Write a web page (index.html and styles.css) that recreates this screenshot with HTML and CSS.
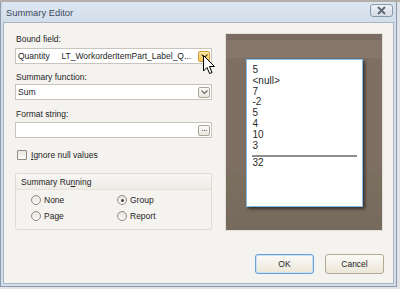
FILE: index.html
```html
<!DOCTYPE html>
<html lang="en">
<head>
    <meta charset="UTF-8">
    <meta name="viewport" content="width=device-width, initial-scale=1.0">
    <title>Summary Editor</title>
    <link rel="stylesheet" href="styles.css">
</head>
<body>
    <div class="desktop">
        <div class="window">
            <div class="titlebar">
                <span class="title">Summary Editor</span>
                <div class="close">
                    <svg width="11" height="9" viewBox="0 0 11 9">
                        <path d="M2 1 L9 8 M9 1 L2 8" stroke="#5f6978" stroke-width="2" fill="none"/>
                    </svg>
                </div>
            </div>
            <div class="client">
                <div class="main">
                    <div class="form">
                        <div class="label first">Bound field:</div>
                        <div class="combo">
                            <span class="value">Quantity&nbsp;&nbsp;&nbsp;&nbsp; LT_WorkorderItemPart_Label_Q...</span>
                            <span class="drop hot">
                                <svg width="7" height="5" viewBox="0 0 7 5"><path d="M0.5 0.5 L3.5 3.5 L6.5 0.5" stroke="#5a4a2a" stroke-width="1.2" fill="none"/></svg>
                            </span>
                        </div>
                        <div class="label second">Summary function:</div>
                        <div class="combo">
                            <span class="value">Sum</span>
                            <span class="drop">
                                <svg width="7" height="5" viewBox="0 0 7 5"><path d="M0.5 0.5 L3.5 3.5 L6.5 0.5" stroke="#6a6a6a" stroke-width="1.2" fill="none"/></svg>
                            </span>
                        </div>
                        <div class="label third">Format string:</div>
                        <div class="combo">
                            <span class="value"></span>
                            <span class="drop dots">&middot;&middot;&middot;</span>
                        </div>
                        <div class="check-row">
                            <span class="checkbox"></span>
                            <span><u>I</u>gnore null values</span>
                        </div>
                        <div class="group">
                            <div class="group-head">Summary Ru<u>n</u>ning</div>
                            <div class="radios">
                                <div class="radio"><span class="dot"></span>None</div>
                                <div class="radio"><span class="dot on"></span>Group</div>
                                <div class="radio"><span class="dot"></span>Page</div>
                                <div class="radio"><span class="dot"></span>Report</div>
                            </div>
                        </div>
                    </div>
                    <div class="preview">
                        <div class="paper">
                            <div>5</div>
                            <div>&lt;null&gt;</div>
                            <div>7</div>
                            <div>-2</div>
                            <div>5</div>
                            <div>4</div>
                            <div>10</div>
                            <div>3</div>
                            <div class="rule"></div>
                            <div>32</div>
                        </div>
                    </div>
                </div>
                <div class="actions">
                    <div class="btn default">OK</div>
                    <div class="btn">Cancel</div>
                </div>
            </div>
        </div>
        <svg class="cursor" width="13" height="20" viewBox="0 0 13 20">
            <path d="M0.5 0.5 L0.5 16 L4 12.5 L6.5 18.5 L9 17.5 L6.5 11.5 L11.5 11.5 Z" fill="#fff" stroke="#000" stroke-width="1"/>
        </svg>
    </div>
</body>
</html>
```

FILE: styles.css
```css
body {
    margin: 0;
    font-family: "Liberation Sans", Arial, sans-serif;
    font-size: 8.5px;
    color: #1e1e1e;
}
.desktop {
    position: relative;
    width: 400px;
    height: 289px;
    background: #dfe3e8;
    border-top: 2px solid #b3aea8;
    box-sizing: border-box;
    overflow: hidden;
}
.window {
    width: 397px;
    height: 285px;
    box-sizing: border-box;
    background: #d3deea;
    border: 1px solid #8d9bad;
    border-top: none;
    padding: 0 2px 2px 2px;
    display: flex;
    flex-direction: column;
}
.titlebar {
    height: 20px;
    display: flex;
    align-items: center;
    justify-content: space-between;
    background: linear-gradient(#dde7f2, #d3deeb);
}
.title {
    font-size: 9.4px;
    color: #3b475a;
    padding-left: 3px;
    padding-top: 1px;
}
.close {
    width: 21px;
    height: 11px;
    margin-right: 1px;
    margin-top: -3px;
    border: 1px solid #8a97a8;
    border-radius: 3px;
    background: linear-gradient(#eef2f7, #d4dce6);
    display: flex;
    align-items: center;
    justify-content: center;
}
.client {
    flex: 1;
    background: #f5f3ef;
    border: 1px solid #a9b6c4;
    display: flex;
    flex-direction: column;
}
.main {
    display: flex;
    padding: 10px 10px 0 11px;
    gap: 13px;
}
.form {
    width: 197px;
}
.label {
    height: 12px;
    line-height: 12px;
    padding-left: 1px;
    margin-bottom: 2px;
}
.label.first {
    margin-top: 0;
    margin-bottom: 3px;
}
.label.second {
    margin-top: 7px;
    margin-bottom: 1px;
}
.label.third {
    margin-top: 8px;
}
.combo {
    height: 14px;
    border: 1px solid #c9c5bd;
    background: #fff;
    display: flex;
    align-items: center;
    justify-content: space-between;
    padding-left: 2px;
}
.value {
    flex: 1;
    white-space: nowrap;
    overflow: hidden;
}
.drop {
    flex: none;
    width: 10px;
    height: 9px;
    margin-right: 1px;
    border: 1px solid #aaa49a;
    border-radius: 2px;
    background: linear-gradient(#fbfaf7, #e9e5dd);
    display: flex;
    align-items: center;
    justify-content: center;
}
.drop.hot {
    border-color: #d49a3a;
    background: linear-gradient(#fde8a8, #f6c759);
}
.drop.dots {
    font-size: 9px;
    line-height: 9px;
    color: #555;
    letter-spacing: -1px;
}
.check-row {
    display: flex;
    align-items: center;
    gap: 4px;
    margin-top: 11px;
    padding-left: 2px;
    height: 12px;
}
.checkbox {
    width: 8px;
    height: 8px;
    border: 1px solid #8f8a82;
    border-radius: 1px;
    background: linear-gradient(#e9e6e0, #fdfcfa);
}
.group {
    margin-top: 12px;
    height: 55px;
    border: 1px solid #e0dcd4;
    border-radius: 2px;
    background: #f5f3ef;
}
.group-head {
    height: 15px;
    line-height: 16px;
    padding-left: 5px;
    background: linear-gradient(#f8f7f4, #efece6);
    border-bottom: 1px solid #e6e2da;
}
.radios {
    display: grid;
    grid-template-columns: 86px 80px;
    row-gap: 4px;
    padding: 4px 0 0 15px;
}
.radio {
    display: flex;
    align-items: center;
    gap: 3px;
    height: 12px;
}
.dot {
    width: 8px;
    height: 8px;
    border: 1px solid #8f8a82;
    border-radius: 50%;
    background: linear-gradient(#e6e3dd, #fdfcfa);
    display: flex;
    align-items: center;
    justify-content: center;
}
.dot.on::after {
    content: "";
    width: 3px;
    height: 3px;
    border-radius: 50%;
    background: #4a4a4a;
}
.preview {
    width: 158px;
    height: 198px;
    border: 1px solid #e4ded4;
    background: linear-gradient(#7a6c62 0, #7a6c62 6px, #86776d 6px, #86776d 24px, #7d6f64 24px, #7d6f64 140px, #7a6f5f 140px, #776a5e 100%);
    display: flex;
    justify-content: center;
    padding-top: 25px;
    box-sizing: border-box;
}
.paper {
    width: 117px;
    height: 148px;
    background: #fff;
    border: 1px solid #86bde9;
    box-shadow: 2px 2px 3px rgba(0, 0, 0, 0.55);
    padding: 5px 0 0 6px;
    box-sizing: border-box;
    line-height: 10.8px;
    font-size: 10px;
    color: #2a2a2a;
}
.rule {
    height: 2px;
    background: #8e8e8e;
    margin: 4px 5px 1px -1px;
}
.actions {
    display: flex;
    justify-content: flex-end;
    gap: 11px;
    margin-top: auto;
    padding: 0 9px 9px 0;
}
.btn {
    width: 57px;
    height: 18px;
    line-height: 18px;
    text-align: center;
    border: 1px solid #b3a894;
    border-radius: 3px;
    background: linear-gradient(#fbfaf6 0, #f3f0e8 50%, #ebe6d6 100%);
}
.btn.default {
    border-color: #6c9fd6;
    box-shadow: inset 0 0 0 1px #c8defa;
}
.cursor {
    position: absolute;
    left: 203px;
    top: 53px;
}
```
